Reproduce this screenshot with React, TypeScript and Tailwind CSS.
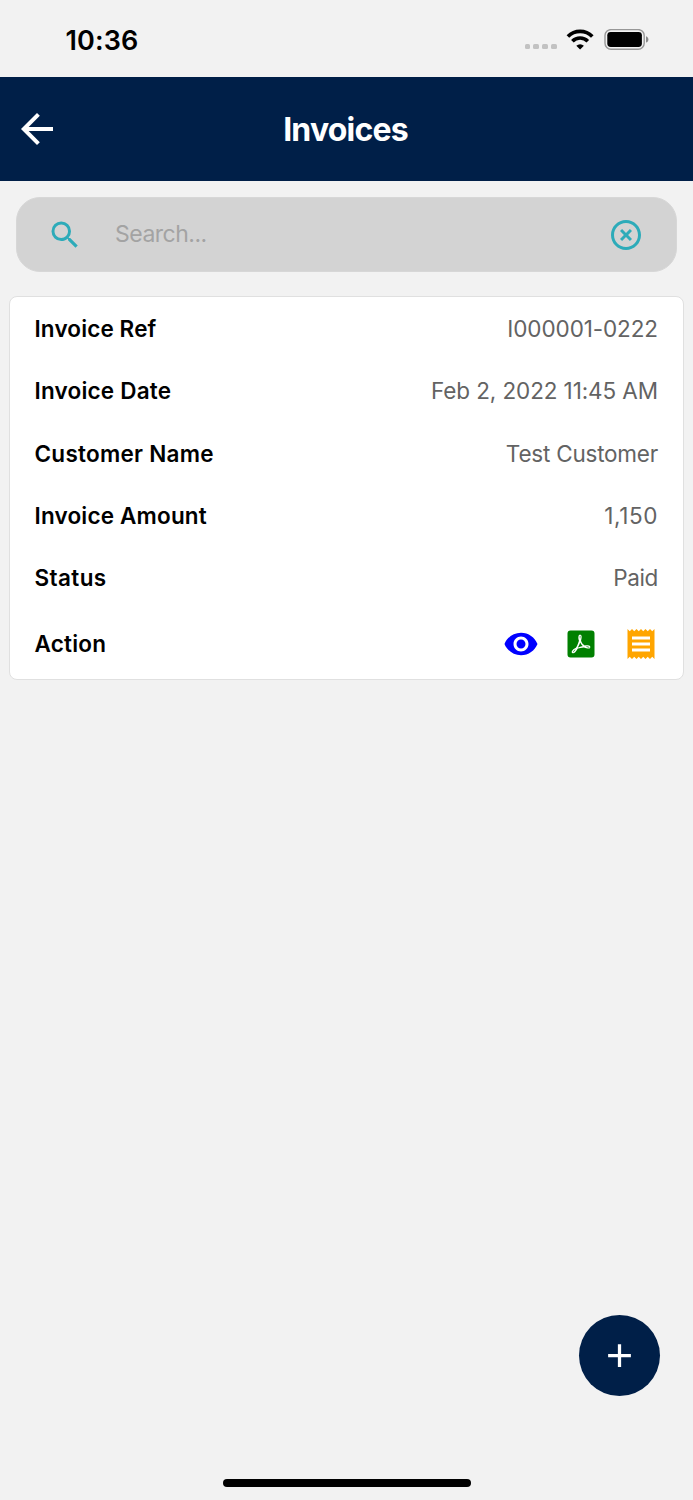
import React from 'react';
import { MdAdd, MdArrowBack, MdReceipt, MdSearch, MdVisibility } from 'react-icons/md';

const invoice = [
    { label: 'Invoice Ref', value: 'I000001-0222', labelSpacing: 'tracking-[0.13px]', valueSpacing: 'tracking-[-0.1px]' },
    { label: 'Invoice Date', value: 'Feb 2, 2022 11:45 AM', labelSpacing: 'tracking-[0.2px]', valueSpacing: 'tracking-[-0.1px]' },
    { label: 'Customer Name', value: 'Test Customer', labelSpacing: 'tracking-[0.27px]', valueSpacing: 'tracking-[-0.22px]' },
    { label: 'Invoice Amount', value: '1,150', labelSpacing: 'tracking-[0.18px]', valueSpacing: 'tracking-[0.6px]' },
    { label: 'Status', value: 'Paid', labelSpacing: 'tracking-[0.4px]', valueSpacing: 'tracking-[-0.35px]' },
];

const WifiIcon = () => (
    <svg width="28" height="22" viewBox="0 0 28 22" fill="none" stroke="#000" strokeWidth="3.7">
        <path d="M1.9 7.5a17.3 17.3 0 0 1 24.4 0" />
        <path d="M6.4 12.2a10.9 10.9 0 0 1 15.4 0" />
        <path d="M14.1 20.6l-3.8-3.9a5.5 5.5 0 0 1 7.6 0z" fill="#000" stroke="none" />
    </svg>
);

const BatteryIcon = () => (
    <svg width="46" height="22" viewBox="0 0 46 22">
        <rect x="1" y="0.6" width="39.2" height="19.6" rx="6" fill="none" stroke="#979797" strokeWidth="1.4" />
        <rect x="3.3" y="2.9" width="34.6" height="15" rx="3.4" fill="#000" />
        <path d="M42 7.2c1.5.5 2.4 1.7 2.4 3.2s-.9 2.7-2.4 3.2z" fill="#8a8a8a" />
    </svg>
);

const ClearIcon = () => (
    <svg width="36" height="36" viewBox="0 0 24 24" fill="#2dabb9">
        <path d="M12 20c-4.41 0-8-3.59-8-8s3.59-8 8-8 8 3.59 8 8-3.59 8-8 8m0-18C6.47 2 2 6.47 2 12s4.47 10 10 10 10-4.47 10-10S17.53 2 12 2m2.59 6L12 10.59 9.41 8 8 9.41 10.59 12 8 14.59 9.41 16 12 13.41 14.59 16 16 14.59 13.41 12 16 9.41 14.59 8z" />
    </svg>
);

const PdfIcon = () => (
    <svg width="36" height="36" viewBox="0 0 24 24" fill="#008000">
        <path d="M11.43,10.94C11.2,11.68 10.87,12.47 10.42,13.34C10.22,13.72 10,14.08 9.92,14.38L10.03,14.34V14.34C11.3,13.85 12.5,13.57 13.37,13.41C13.22,13.31 13.08,13.2 12.96,13.09C12.36,12.58 11.84,11.84 11.43,10.94M17.91,14.75C17.74,14.94 17.44,15.05 17,15.05C16.24,15.05 15,14.82 14,14.31C12.28,14.5 11,14.73 9.97,15.06C9.92,15.08 9.86,15.1 9.79,15.13C8.55,17.25 7.63,18.2 6.82,18.2C6.66,18.2 6.5,18.16 6.38,18.09L5.9,17.78L5.87,17.73C5.8,17.55 5.78,17.38 5.82,17.19C5.93,16.66 6.5,15.82 7.7,15.07C7.89,14.93 8.19,14.77 8.59,14.58C8.89,14.06 9.21,13.45 9.55,12.78C10.06,11.75 10.38,10.73 10.63,9.85V9.84C10.26,8.63 10.04,7.9 10.41,6.57C10.5,6.19 10.83,5.8 11.2,5.8H11.44C11.67,5.8 11.89,5.88 12.05,6.04C12.71,6.7 12.4,8.31 12.07,9.64C12.05,9.7 12.04,9.75 12.03,9.78C12.43,10.91 13,11.82 13.63,12.34C13.89,12.54 14.18,12.74 14.5,12.92C14.95,12.87 15.38,12.85 15.79,12.85C17.03,12.85 17.78,13.07 18.07,13.54C18.17,13.7 18.22,13.89 18.19,14.09C18.18,14.34 18.09,14.57 17.91,14.75M19,3H5A2,2 0 0,0 3,5V19A2,2 0 0,0 5,21H19A2,2 0 0,0 21,19V5A2,2 0 0,0 19,3M17.5,14.04C17.4,13.94 17,13.69 15.6,13.69C15.53,13.69 15.46,13.69 15.37,13.79C16.1,14.11 16.81,14.3 17.27,14.3C17.34,14.3 17.4,14.29 17.46,14.28H17.5C17.55,14.26 17.58,14.25 17.59,14.15C17.57,14.12 17.55,14.08 17.5,14.04M8.33,15.5C8.12,15.62 7.95,15.73 7.85,15.81C7.14,16.46 6.69,17.12 6.64,17.5C7.09,17.35 7.68,16.69 8.33,15.5M11.35,8.59L11.4,8.55C11.47,8.23 11.5,7.95 11.56,7.73L11.59,7.57C11.69,7 11.67,6.71 11.5,6.47L11.35,6.42C11.33,6.45 11.3,6.5 11.28,6.54C11.11,6.96 11.12,7.69 11.35,8.59Z" />
    </svg>
);

const StatusBar = () => (
    <div className="flex h-[76.5px] shrink-0 items-start justify-between pl-[65.5px] pr-[43px]">
        <span className="mt-[25px] text-[27px] leading-[32px] font-semibold tracking-[0.1px] text-black">10:36</span>
        <div className="mt-[28.5px] flex items-start">
            <div className="mt-[15px] mr-[9.5px] flex gap-[3px]">
                <i className="h-[5.5px] w-[5.7px] rounded-[1.5px] bg-[#c2c2c2]" />
                <i className="h-[5.5px] w-[5.7px] rounded-[1.5px] bg-[#c2c2c2]" />
                <i className="h-[5.5px] w-[5.7px] rounded-[1.5px] bg-[#c2c2c2]" />
                <i className="h-[5.5px] w-[5.7px] rounded-[1.5px] bg-[#c2c2c2]" />
            </div>
            <WifiIcon />
            <div className="ml-[10px]">
                <BatteryIcon />
            </div>
        </div>
    </div>
);

const Header = () => (
    <header className="grid h-[104.5px] shrink-0 grid-cols-[1fr_auto_1fr] items-center bg-[#001f48] px-[13px] text-white">
        <button aria-label="Back" className="w-12">
            <MdArrowBack size={48} />
        </button>
        <h1 className="pt-[2px] pr-[2px] text-[32px] font-bold tracking-[-0.8px]">Invoices</h1>
    </header>
);

const SearchBar = () => (
    <div className="mx-4 mt-4 flex h-[75px] shrink-0 items-center rounded-[24px] border border-[#d7d7d7] bg-[#d3d3d3] pr-[31.6px] pl-[30.4px]">
        <MdSearch size={36} color="#2dabb9" />
        <input
            placeholder="Search..."
            className="ml-[31.6px] min-w-0 flex-1 text-[23px] tracking-[-0.5px] outline-none placeholder:text-[#a3a3a3]"
        />
        <button aria-label="Clear">
            <ClearIcon />
        </button>
    </div>
);

const InvoiceCard = () => (
    <div className="mt-[24px] mr-[9px] ml-[8.5px] h-[384px] shrink-0 rounded-[8px] border-[1.5px] border-[#e0e0e0] bg-white pt-[1px] pr-[25px] pl-[25px] text-[22.5px]">
        {invoice.map((row) => (
            <div key={row.label} className="flex h-[62.2px] items-center justify-between">
                <span className={`font-semibold text-black ${row.labelSpacing}`}>{row.label}</span>
                <span className={`text-[#636363] ${row.valueSpacing}`}>{row.value}</span>
            </div>
        ))}
        <div className="flex h-[70px] items-center justify-between">
            <span className="font-semibold tracking-[0.2px] text-black">Action</span>
            <div className="-mr-[0.5px] flex gap-[24px]">
                <MdVisibility size={36} color="#0000ff" />
                <PdfIcon />
                <MdReceipt size={36} color="#ffa500" />
            </div>
        </div>
    </div>
);

function App() {
    return (
        <div className="relative flex h-[1500px] w-[693px] flex-col overflow-hidden bg-[#f2f2f2] font-['Inter',sans-serif]">
            <StatusBar />
            <Header />
            <SearchBar />
            <InvoiceCard />
            <button
                aria-label="Add invoice"
                className="absolute top-[1315px] left-[579.4px] flex h-[81px] w-[81px] items-center justify-center rounded-full bg-[#001f48] text-white"
            >
                <MdAdd size={39} />
            </button>
            <div className="mt-auto mb-[13px] ml-[223px] h-[8.5px] w-[247.5px] rounded-full bg-black" />
        </div>
    );
}

export default App;
